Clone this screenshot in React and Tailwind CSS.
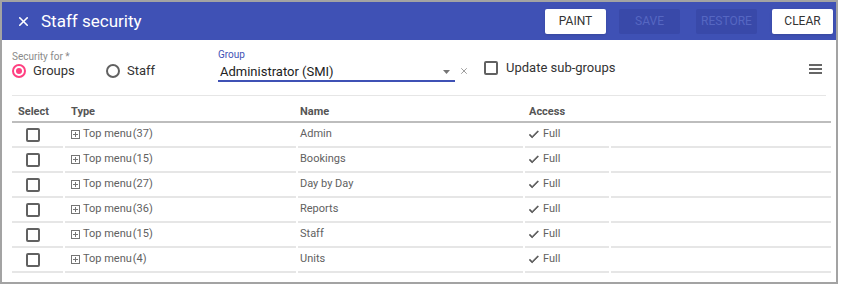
import { X } from "lucide-react";

const rows = [
  { id: 1, count: 37, name: "Admin" },
  { id: 2, count: 15, name: "Bookings" },
  { id: 3, count: 27, name: "Day by Day" },
  { id: 4, count: 36, name: "Reports" },
  { id: 5, count: 15, name: "Staff" },
  { id: 6, count: 4, name: "Units" },
];

function Box() {
  return <span className="block w-[14px] h-[14px] border-2 border-[#616161] rounded-[2px]" />;
}

function PlusBox() {
  return (
    <svg width="9" height="9" viewBox="0 0 9 9" className="shrink-0">
      <rect x="0.5" y="0.5" width="8" height="8" fill="none" stroke="#757575" />
      <path d="M2 4.5h5M4.5 2v5" stroke="#757575" />
    </svg>
  );
}

function Done() {
  return (
    <svg width="10" height="9" viewBox="3 5 19 15" className="shrink-0">
      <path d="M9 16.17L4.83 12l-1.42 1.41L9 19 21 7l-1.41-1.41z" fill="#555" stroke="#555" strokeWidth="1.4" strokeLinejoin="round" />
    </svg>
  );
}

const th =
  "relative text-left font-bold text-[#555] align-bottom pb-[3px] after:absolute after:left-0 after:-right-[2px] after:bottom-0 after:h-[2px] after:bg-[#bdbdbd]";
const td = "border-b-2 border-[#e6e6e6] text-[#616161]";

export default function App() {
  return (
    <div className="w-[838px] h-[284px] border-2 border-[#a3a3a3] bg-white font-['Roboto',sans-serif] overflow-hidden">
      {/* Header */}
      <div className="h-[38px] bg-[#3f51b5] flex items-center pl-[14px] pr-[3px]">
        <X className="text-white w-[15px] h-[15px]" strokeWidth={2.5} />
        <h1 className="ml-[10px] text-white text-[17px] leading-none">Staff security</h1>
        <div className="ml-auto flex items-center">
          <button className="w-[61px] h-[25px] bg-white text-[#333] text-[12px] rounded-[2px] shadow-sm">PAINT</button>
          <button className="ml-[13px] w-[61px] h-[25px] bg-[#3949a9] text-[#5667c2] text-[12px] rounded-[2px]">SAVE</button>
          <button className="ml-[16px] w-[61px] h-[25px] bg-[#3949a9] text-[#5667c2] text-[12px] rounded-[2px]">RESTORE</button>
          <button className="ml-[15px] w-[61px] h-[25px] bg-white text-[#333] text-[12px] rounded-[2px] shadow-sm">CLEAR</button>
        </div>
      </div>

      <div className="px-[10px]">
        {/* Form row */}
        <div className="h-[56px] flex border-b border-[#e6e6e6]">
          <div className="w-[206px] pt-[12px]">
            <div className="text-[10px] leading-[10px] text-[#8a8a8a]">Security for *</div>
            <div className="mt-[1px] h-[16px] flex items-center">
              <label className="w-[94px] flex items-center">
                <span className="w-[14px] h-[14px] rounded-full border-2 border-[#ff4081] flex items-center justify-center">
                  <span className="w-[6px] h-[6px] rounded-full bg-[#ff4081]" />
                </span>
                <span className="ml-[7px] text-[13px] text-[#333]">Groups</span>
              </label>
              <label className="flex items-center">
                <span className="w-[14px] h-[14px] rounded-full border-2 border-[#616161]" />
                <span className="ml-[7px] text-[13px] text-[#333]">Staff</span>
              </label>
            </div>
          </div>

          <div className="w-[237px] pt-[10px]">
            <div className="text-[10px] leading-[10px] text-[#3f51b5]">Group</div>
            <div className="mt-[4px] h-[18px] flex items-center border-b-2 border-[#3f51b5] pl-[2px]">
              <span className="text-[13px] text-[#222]">Administrator (SMI)</span>
              <svg width="7" height="4" viewBox="0 0 7 4" className="ml-auto mr-[5px]">
                <path d="M0 0h7L3.5 4z" fill="#757575" />
              </svg>
            </div>
          </div>
          <div className="pt-[26px] pl-[4px]">
            <X className="w-[10px] h-[10px] text-[#8a8a8a]" strokeWidth={2} />
          </div>

          <label className="ml-[15px] pt-[21px] flex items-start">
            <Box />
            <span className="ml-[8px] text-[13px] leading-[14px] text-[#333]">Update sub-groups</span>
          </label>

          <div className="ml-auto pt-[24px] pr-[4px] flex flex-col gap-[2.5px]">
            <span className="block w-[13px] h-[1.5px] bg-[#666]" />
            <span className="block w-[13px] h-[1.5px] bg-[#666]" />
            <span className="block w-[13px] h-[1.5px] bg-[#666]" />
          </div>
        </div>

        {/* Table */}
        <table className="mt-[3px] w-[823px] -ml-[2px] table-fixed border-separate border-spacing-x-[2px] border-spacing-y-0 text-[11px]">
          <colgroup>
            <col className="w-[51px]" />
            <col className="w-[231px]" />
            <col className="w-[225px]" />
            <col className="w-[84px]" />
            <col />
          </colgroup>
          <thead>
            <tr className="h-[24px]">
              <th className={`${th} pl-[6px]`}>Select</th>
              <th className={`${th} pl-[6px]`}>Type</th>
              <th className={`${th} pl-[2px]`}>Name</th>
              <th className={`${th} pl-[4px]`}>Access</th>
              <th className={`${th} after:right-0`} />
            </tr>
          </thead>
          <tbody>
            {rows.map((r) => (
              <tr key={r.id} className="h-[25px]">
                <td className={`${td} pl-[14px]`}>
                  <Box />
                </td>
                <td className={`${td} pl-[6px]`}>
                  <div className="flex items-center">
                    <PlusBox />
                    <span className="ml-[3px]">Top menu</span>
                    <span className="ml-[1px]">({r.count})</span>
                  </div>
                </td>
                <td className={`${td} pl-[2px]`}>{r.name}</td>
                <td className={`${td} pl-[4px]`}>
                  <div className="flex items-center">
                    <Done />
                    <span className="ml-[4px]">Full</span>
                  </div>
                </td>
                <td className={td} />
              </tr>
            ))}
          </tbody>
        </table>
      </div>
    </div>
  );
}
